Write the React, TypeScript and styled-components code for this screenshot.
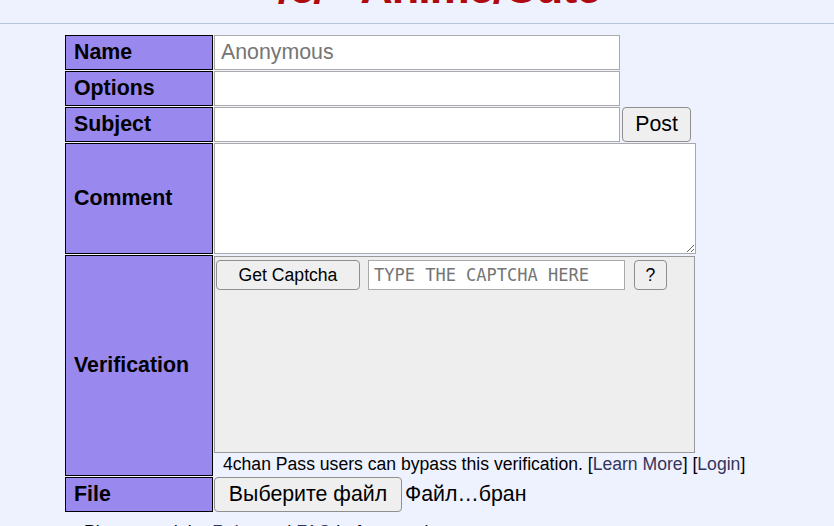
import React, { FC } from "react";
import styled, { createGlobalStyle } from "styled-components";

const GlobalStyle = createGlobalStyle`
  html, body {
    margin: 0;
    padding: 0;
    overflow: hidden;
    background: #eef2ff;
    font-family: "Liberation Sans", Arial, sans-serif;
    color: #000;
  }
`;

const Header = styled.div`
  height: 23px;
  overflow: hidden;
  border-bottom: 1px solid #b7c5d9;
  padding-left: 44px;
  text-align: center;
`;

const Title = styled.h1`
  margin: -35px 0 0;
  font-family: "Liberation Sans", Arial, sans-serif;
  font-size: 45px;
  line-height: 45px;
  font-weight: bold;
  letter-spacing: -1px;
  color: #af0a0f;
`;

const Form = styled.div`
  display: grid;
  grid-template-columns: 148px 483px;
  column-gap: 1px;
  row-gap: 1px;
  margin: 11px 0 0 65px;
`;

const Label = styled.div`
  display: flex;
  align-items: center;
  box-sizing: border-box;
  padding: 0 8px;
  background: #9988ee;
  border: 1px solid #000;
  font-size: 21.33px;
  font-weight: bold;
`;

const Field = styled.div`
  display: flex;
  align-items: flex-start;
  gap: 2px;
`;

const TextInput = styled.input<{ $w?: number }>`
  box-sizing: border-box;
  width: ${(p) => p.$w ?? 406}px;
  height: 35px;
  margin: 0;
  padding: 0 6px;
  border: 1px solid #aaa;
  border-radius: 0;
  background: #fff;
  font-family: "Liberation Sans", Arial, sans-serif;
  font-size: 21.33px;
  outline: none;

  &::placeholder {
    color: #757575;
  }
`;

const Button = styled.button<{ $w: number; $h: number; $size: number }>`
  box-sizing: border-box;
  width: ${(p) => p.$w}px;
  height: ${(p) => p.$h}px;
  margin: 0;
  padding: 0;
  background: #efefef;
  border: 1px solid #8f8f8f;
  border-radius: 4px;
  font-family: "Liberation Sans", Arial, sans-serif;
  font-size: ${(p) => p.$size}px;
  color: #000;
`;

const Comment = styled.textarea`
  box-sizing: border-box;
  width: 482px;
  height: 111px;
  margin: 0;
  border: 1px solid #aaa;
  background: #fff;
  font-family: "Liberation Sans", Arial, sans-serif;
  outline: none;
  display: block;
`;

const Verify = styled.div`
  display: flex;
  flex-direction: column;
`;

const CaptchaBox = styled.div`
  box-sizing: border-box;
  width: 481px;
  height: 197px;
  margin-top: 1px;
  padding: 3px 1px;
  display: flex;
  align-items: flex-start;
  gap: 8px;
  background: #eee;
  border: 1px solid #999;
`;

const CaptchaInput = styled.input`
  box-sizing: border-box;
  width: 257px;
  height: 30px;
  margin: 0 1px 0 0;
  padding: 0 5px;
  border: 1px solid #aaa;
  background: #fff;
  font-family: "DejaVu Sans Mono", "Liberation Mono", monospace;
  font-size: 17px;
  outline: none;

  &::placeholder {
    color: #757575;
  }
`;

const PassNote = styled.div`
  padding-left: 9px;
  font-size: 17.6px;
  line-height: 23px;
  white-space: nowrap;
`;

const Link = styled.a`
  color: #34345c;
  text-decoration: none;
`;

const FileName = styled.span`
  align-self: center;
  margin-left: 1px;
  font-size: 21.33px;
`;

const Rules = styled.ul`
  list-style: none;
  margin: 10px 0 0;
  padding-left: 84px;
  font-size: 17.6px;
  line-height: 20px;
`;

const App: FC = () => (
  <>
    <GlobalStyle />
    <Header>
      <Title>/c/ - Anime/Cute</Title>
    </Header>
    <Form>
      <Label>Name</Label>
      <Field>
        <TextInput placeholder="Anonymous" />
      </Field>

      <Label>Options</Label>
      <Field>
        <TextInput />
      </Field>

      <Label>Subject</Label>
      <Field>
        <TextInput />
        <Button $w={69} $h={35} $size={21.33}>
          Post
        </Button>
      </Field>

      <Label>Comment</Label>
      <Field>
        <Comment />
      </Field>

      <Label>Verification</Label>
      <Verify>
        <CaptchaBox>
          <Button $w={144} $h={30} $size={17.6}>
            Get Captcha
          </Button>
          <CaptchaInput placeholder="TYPE THE CAPTCHA HERE" />
          <Button $w={33} $h={30} $size={17.6}>
            ?
          </Button>
        </CaptchaBox>
        <PassNote>
          4chan Pass users can bypass this verification. [
          <Link href="#">Learn More</Link>] [<Link href="#">Login</Link>]
        </PassNote>
      </Verify>

      <Label>File</Label>
      <Field>
        <Button $w={188} $h={35} $size={21.33}>
          Выберите файл
        </Button>
        <FileName>Файл…бран</FileName>
      </Field>
    </Form>
    <Rules>
      <li>
        Please read the <Link href="#">Rules</Link> and{" "}
        <Link href="#">FAQ</Link> before posting.
      </li>
    </Rules>
  </>
);

export default App;
